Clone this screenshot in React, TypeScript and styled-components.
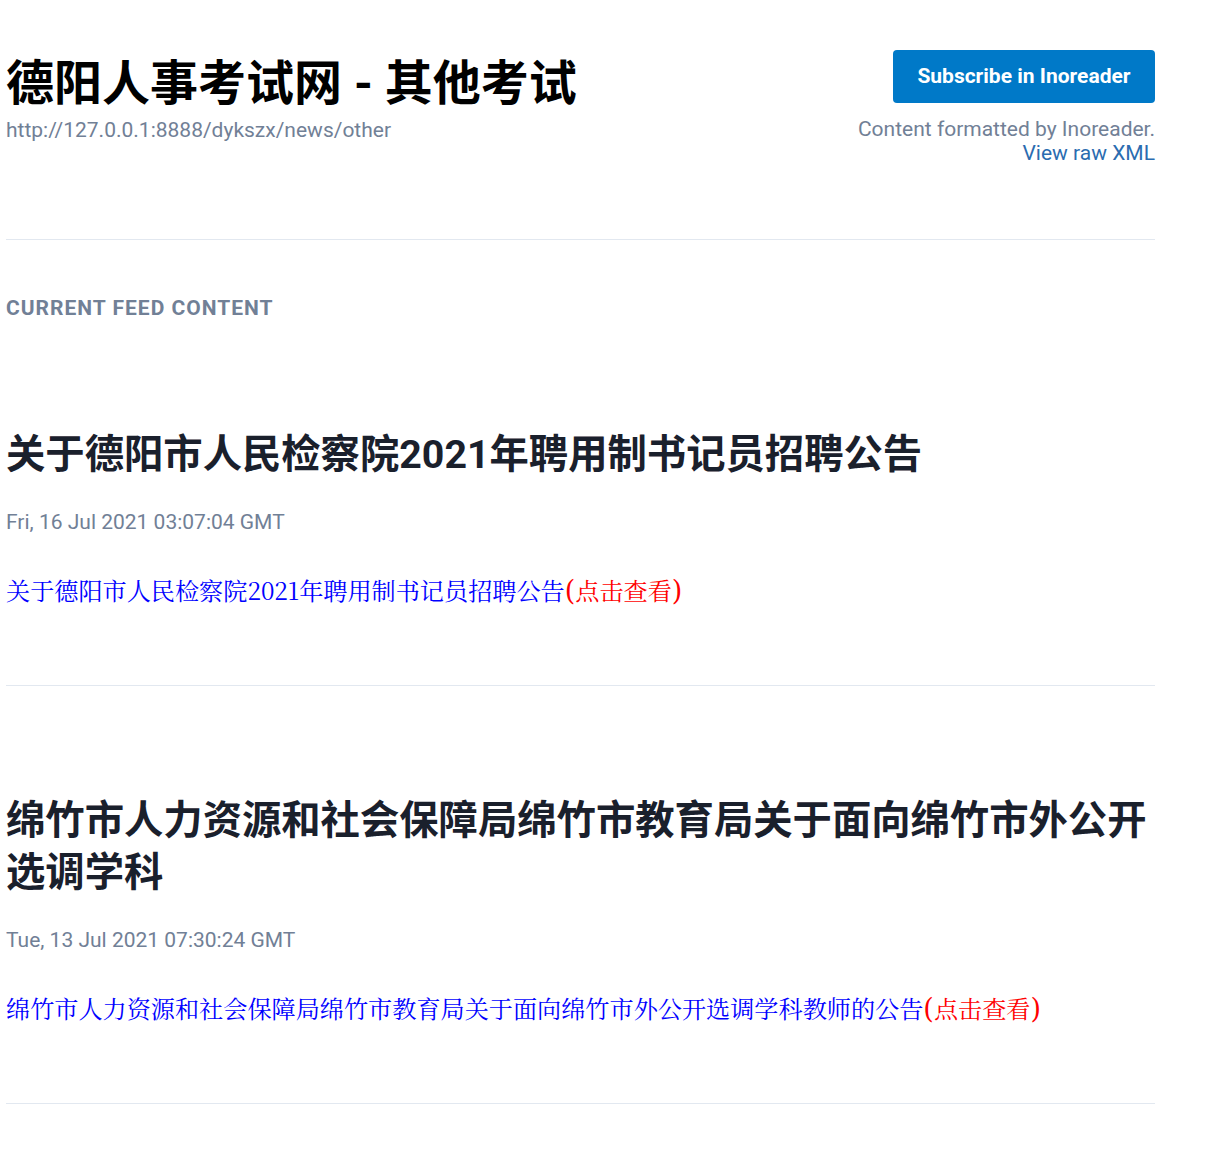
import styled, { createGlobalStyle } from "styled-components";

const GlobalStyle = createGlobalStyle`
  html, body {
    margin: 0;
    padding: 0;
    background: #ffffff;
  }
  body {
    font-family: Roboto, "Noto Sans CJK SC", sans-serif;
  }
`;

const items = [
  {
    title: "关于德阳市人民检察院2021年聘用制书记员招聘公告",
    date: "Fri, 16 Jul 2021 03:07:04 GMT",
    text: "关于德阳市人民检察院2021年聘用制书记员招聘公告",
  },
  {
    title: "绵竹市人力资源和社会保障局绵竹市教育局关于面向绵竹市外公开选调学科",
    date: "Tue, 13 Jul 2021 07:30:24 GMT",
    text: "绵竹市人力资源和社会保障局绵竹市教育局关于面向绵竹市外公开选调学科教师的公告",
  },
];

export default function App() {
  return (
    <>
      <GlobalStyle />
      <Page>
        <Header>
          <div>
            <SiteTitle>德阳人事考试网 - 其他考试</SiteTitle>
            <FeedUrl>http://127.0.0.1:8888/dykszx/news/other</FeedUrl>
          </div>
          <Aside>
            <SubscribeButton href="#">Subscribe in Inoreader</SubscribeButton>
            <Note>Content formatted by Inoreader.</Note>
            <RawLink href="#">View raw XML</RawLink>
          </Aside>
        </Header>
        <Rule />
        <SectionLabel>Current Feed Content</SectionLabel>
        {items.map((item) => (
          <Article key={item.date}>
            <ArticleTitle>{item.title}</ArticleTitle>
            <DateLine>{item.date}</DateLine>
            <Description>
              <BlueText>{item.text}</BlueText>
              <RedText>
                <Paren>(</Paren>点击查看<Paren>)</Paren>
              </RedText>
            </Description>
            <Rule />
          </Article>
        ))}
      </Page>
    </>
  );
}

const Page = styled.div`
  width: 1149px;
  padding: 50px 0 70px 6px;
`;

const Header = styled.header`
  display: flex;
  flex-direction: row;
  justify-content: space-between;
  align-items: flex-start;
`;

const SiteTitle = styled.h1`
  margin: 5px 0 0 0;
  font-family: Roboto, "Noto Sans CJK SC", sans-serif;
  font-size: 48px;
  line-height: 58px;
  font-weight: 700;
  color: #000000;
`;

const FeedUrl = styled.div`
  margin-top: 3px;
  font-size: 21px;
  line-height: 28px;
  color: #718096;
`;

const Aside = styled.div`
  display: flex;
  flex-direction: column;
  align-items: flex-end;
  text-align: right;
`;

const SubscribeButton = styled.a`
  display: block;
  box-sizing: border-box;
  height: 53px;
  padding: 0 24.5px;
  border-radius: 4px;
  background: #0079c8;
  color: #ffffff;
  font-size: 21px;
  font-weight: 700;
  line-height: 53px;
  text-decoration: none;
  margin-bottom: 14px;
`;

const Note = styled.div`
  font-size: 21px;
  line-height: 24px;
  color: #718096;
`;

const RawLink = styled.a`
  font-size: 21px;
  line-height: 24px;
  color: #2b6cb0;
  text-decoration: none;
`;

const Rule = styled.hr`
  margin: 74px 0 0 0;
  border: 0;
  height: 1px;
  background: #e2e8f0;
`;

const SectionLabel = styled.div`
  margin-top: 56px;
  font-size: 21px;
  line-height: 24px;
  font-weight: 700;
  letter-spacing: 1px;
  text-transform: uppercase;
  color: #718096;
`;

const Article = styled.article`
  padding-top: 109px;

  & > hr {
    margin-top: 79px;
  }
`;

const ArticleTitle = styled.h2`
  margin: 0;
  font-family: Roboto, "Noto Sans CJK SC", sans-serif;
  font-size: 39.35px;
  line-height: 52px;
  font-weight: 700;
  color: #1a202c;
`;

const DateLine = styled.div`
  margin-top: 29px;
  font-size: 21px;
  line-height: 24px;
  color: #718096;
`;

const Description = styled.p`
  margin: 40px 0 0 0;
  font-family: "Noto Serif CJK SC", "Liberation Serif", "Noto Sans CJK SC", serif;
  font-size: 24.15px;
  line-height: 32px;
`;

const BlueText = styled.span`
  color: #0000ff;
`;

const RedText = styled.span`
  color: #ff0000;
`;

const Paren = styled.span`
  font-family: "DejaVu Serif", serif;
  font-size: 27px;
  line-height: 24px;
  font-weight: 300;
`;
